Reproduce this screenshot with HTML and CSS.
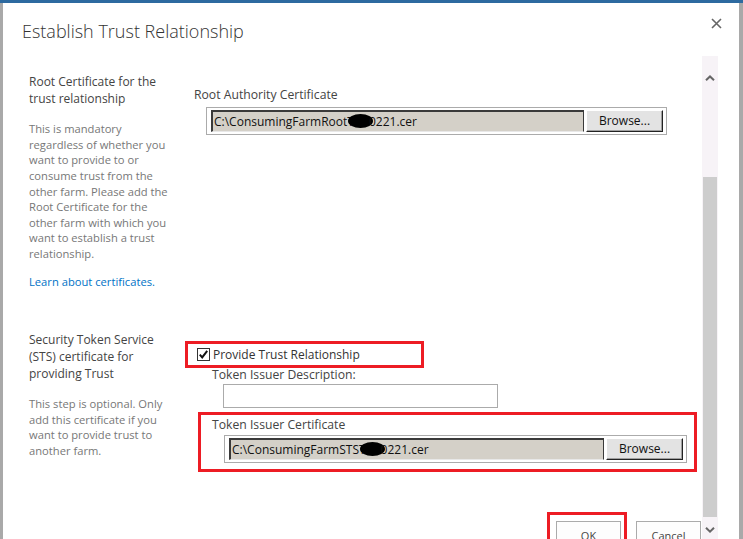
FILE: index.html
```html
<!DOCTYPE html>
<html lang="en">
<head>
<meta charset="utf-8">
<title>Establish Trust Relationship</title>
<link rel="stylesheet" href="styles.css">
</head>
<body>
<div class="screen">
  <div class="topline"></div>
  <div class="frame">
    <div class="dialog">
      <header class="dlg-head">
        <h1 class="dlg-title">Establish Trust Relationship</h1>
        <svg class="close" width="11" height="11" viewBox="0 0 11 11" aria-label="Close">
          <path d="M1 1 L10 10 M10 1 L1 10" stroke="#666" stroke-width="1.6" fill="none"/>
        </svg>
      </header>
      <div class="dlg-body">
        <div class="content">
          <section class="row row-root">
            <div class="side">
              <h2 class="side-title">Root Certificate for the trust relationship</h2>
              <p class="side-desc">This is mandatory regardless of whether you want to provide to or consume trust from the other farm. Please add the Root Certificate for the other farm with which you want to establish a trust relationship.</p>
              <a class="side-link" href="#">Learn about certificates.</a>
            </div>
            <div class="main main-root">
              <div class="field-label root-label">Root Authority Certificate</div>
              <div class="file file-root">
                <div class="file-path">C:\ConsumingFarmRootT<span class="blot"></span>0221.cer</div>
                <div class="file-browse">Browse...</div>
              </div>
            </div>
          </section>
          <section class="row row-sts">
            <div class="side">
              <h2 class="side-title">Security Token Service (STS) certificate for providing Trust</h2>
              <p class="side-desc">This step is optional. Only add this certificate if you want to provide trust to another farm.</p>
            </div>
            <div class="main main-sts">
              <div class="mark mark-check">
                <label class="check">
                  <svg class="check-box" width="13" height="13" viewBox="0 0 13 13">
                    <rect x="0.5" y="0.5" width="12" height="12" fill="#fff" stroke="#333"/>
                    <path d="M2.8 6.6 L5.2 9.4 L10.2 2.8" stroke="#111" stroke-width="2" fill="none"/>
                  </svg>
                  <span>Provide Trust Relationship</span>
                </label>
              </div>
              <div class="field-label desc-label">Token Issuer Description:</div>
              <div class="text-input"></div>
              <div class="mark mark-cert">
                <div class="field-label cert-label">Token Issuer Certificate</div>
                <div class="file file-sts">
                  <div class="file-path">C:\ConsumingFarmSTST<span class="blot"></span>0221.cer</div>
                  <div class="file-browse">Browse...</div>
                </div>
              </div>
            </div>
          </section>
          <div class="actions">
            <div class="mark mark-ok"><button class="btn">OK</button></div>
            <button class="btn btn-cancel">Cancel</button>
          </div>
        </div>
        <div class="scrollbar">
          <div class="sb-btn sb-up">
            <svg width="10" height="6" viewBox="0 0 10 6"><path d="M1 5.2 L5 1.4 L9 5.2" stroke="#666" stroke-width="2" fill="none"/></svg>
          </div>
          <div class="sb-track"><div class="sb-thumb"></div></div>
          <div class="sb-btn sb-down">
            <svg width="10" height="6" viewBox="0 0 10 6"><path d="M1 0.8 L5 4.6 L9 0.8" stroke="#666" stroke-width="2" fill="none"/></svg>
          </div>
        </div>
      </div>
    </div>
  </div>
</div>
</body>
</html>
```

FILE: styles.css
```css
* { box-sizing: border-box; }
html, body { margin: 0; padding: 0; }
body {
  background: #a9a9a9;
  font-family: "Open Sans", "Noto Sans", sans-serif;
  overflow: hidden;
}
.screen { height: 539px; display: flex; flex-direction: column; }
.topline { height: 3px; background: #2d6aa0; flex: none; }
.frame { flex: 1; display: flex; padding: 0 4px 0 3px; min-height: 0; }
.dialog { flex: 1; background: #fff; display: flex; flex-direction: column; min-height: 0; }

.dlg-head {
  height: 53px; flex: none;
  display: flex; justify-content: space-between; align-items: flex-start;
  padding: 16px 17px 0 19px;
}
.dlg-title { margin: 0; font-size: 18px; font-weight: 300; line-height: 24px; color: #333; }
.close { margin-top: -1px; }

.dlg-body { flex: 1; display: flex; min-height: 0; padding-right: 21px; }
.content { flex: 1; overflow: hidden; padding: 18px 0 0 26px; min-width: 0; }

.row { display: flex; align-items: flex-start; }
.row-sts { margin-top: 43px; }
.side { width: 142px; flex: none; margin-right: 14px; }
.side-title { margin: 0; font-size: 12px; font-weight: 400; line-height: 16.7px; color: #444; }
.side-desc { margin: 13.8px 0 0; font-size: 11.2px; line-height: 15.6px; color: #777; }
.side-link { display: block; margin-top: 12px; font-size: 11.2px; line-height: 15.6px; color: #0072c6; text-decoration: none; }

.main { flex: 1; min-width: 0; }
.field-label { font-size: 12.2px; line-height: 17px; color: #444; }
.main-root { margin-top: 12px; }
.root-label { padding-left: 9px; }

.file {
  display: flex; height: 28px;
  border: 1px solid #ababab; background: #fff;
  padding: 2px 3px 2px 4px;
}
.file-root { margin: 4px 0 0 21px; width: 461px; }
.file-path {
  flex: 1; background: #d4d0c8;
  border-top: 2px solid #3a3a3a; border-left: 2px solid #3a3a3a;
  border-right: 1px solid #3a3a3a; border-bottom: 1px solid #e8e8e8;
  font-size: 12px; line-height: 19px; color: #111; padding-left: 1px;
  white-space: nowrap; overflow: hidden;
}
.blot {
  display: inline-block; width: 25px; height: 14px; background: #000;
  border-radius: 50%; vertical-align: -2px; margin: 0 -4px 0 -6px;
}
.file-browse {
  width: 77px; flex: none; margin-left: 2px;
  background: #e3e3e3;
  border-top: 1px solid #fff; border-left: 1px solid #fff;
  border-right: 1px solid #222; border-bottom: 1px solid #222;
  box-shadow: inset -1px -1px 0 #a0a0a0;
  font-size: 12px; line-height: 20px; text-align: center; color: #111;
}

.main-sts { margin-top: 8.4px; }
.mark { border: 3px solid #ed1c24; }
.mark-check {
  width: 239px; height: 27px; padding-left: 9px;
  display: flex; align-items: center;
}
.check { display: flex; align-items: center; gap: 3px; font-size: 12px; color: #333; }
.check-box { flex: none; }
.desc-label { margin: -2px 0 0 27px; }
.text-input { margin: 1px 0 0 38px; width: 275px; height: 24px; border: 1px solid #ababab; background: #fff; }
.mark-cert { margin: 4px 0 0 13px; width: 499px; padding: 1px 0 6px 11px; }
.file-sts { margin: 2px 0 0 12px; width: 463px; }

.actions {
  margin-top: 40px; display: flex; justify-content: flex-end; align-items: flex-start;
  gap: 9px; padding-right: 1px;
}
.mark-ok { padding: 6px 3px 0 6px; }
.btn {
  width: 65px; height: 30px; border: 1px solid #ababab; background: #fdfdfd;
  font-family: inherit; font-size: 11px; color: #444; padding: 0;
}
.btn-cancel { margin-top: 9px; }

.scrollbar { width: 16px; flex: none; background: #f7f3f7; display: flex; flex-direction: column; }
.sb-btn { display: flex; justify-content: center; flex: none; }
.sb-up { height: 44px; align-items: center; }
.sb-track { height: 417px; padding: 77px 1px 0; flex: none; }
.sb-thumb { height: 340px; background: #cdcdcd; }
.sb-down { height: 22px; padding-top: 10px; align-items: flex-start; }
```
